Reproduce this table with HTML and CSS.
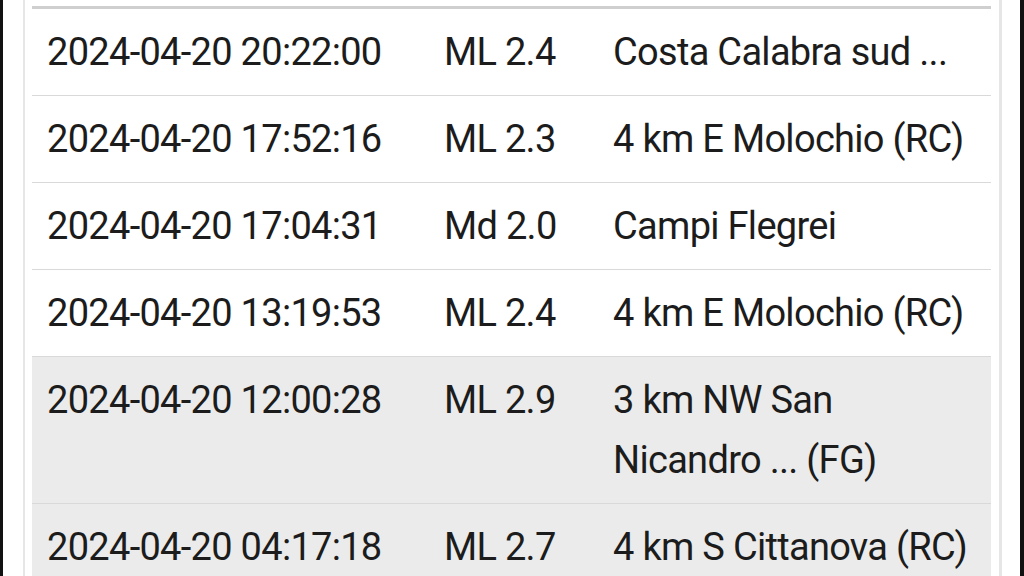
FILE: index.html
```html
<!DOCTYPE html>
<html>
<head>
<meta charset="utf-8">
<link rel="stylesheet" href="styles.css">
</head>
<body>
<div class="frame">
  <div class="panel">
    <table class="quakes">
      <colgroup>
        <col class="c-date"><col class="c-mag"><col class="c-loc">
      </colgroup>
      <tbody>
        <tr><td>2024-04-20 20:22:00</td><td>ML 2.4</td><td>Costa Calabra sud ...</td></tr>
        <tr><td>2024-04-20 17:52:16</td><td>ML 2.3</td><td>4 km E Molochio (RC)</td></tr>
        <tr><td>2024-04-20 17:04:31</td><td>Md 2.0</td><td>Campi Flegrei</td></tr>
        <tr><td>2024-04-20 13:19:53</td><td>ML 2.4</td><td>4 km E Molochio (RC)</td></tr>
        <tr class="hl"><td>2024-04-20 12:00:28</td><td>ML 2.9</td><td>3 km NW San Nicandro ... (FG)</td></tr>
        <tr class="hl"><td>2024-04-20 04:17:18</td><td>ML 2.7</td><td>4 km S Cittanova (RC)</td></tr>
      </tbody>
    </table>
  </div>
</div>
</body>
</html>
```
FILE: styles.css
```css
html, body {
  margin: 0;
  padding: 0;
  background: #fff;
  height: 100%;
  overflow: hidden;
}
.frame {
  height: 576px;
  border-left: 3px solid #111;
  border-right: 4px solid #111;
  box-sizing: border-box;
  padding: 0 18px 0 20px;
}
.panel {
  height: 100%;
  border-left: 2px solid #e6e6e6;
  border-right: 3px solid #e6e6e6;
  padding: 6px 6px 0 7px;
  box-sizing: border-box;
}
.quakes {
  width: 959px;
  border-collapse: collapse;
  table-layout: fixed;
  font-family: Roboto, "Noto Sans", sans-serif;
  font-size: 38px;
  letter-spacing: -0.7px;
  line-height: 60px;
  color: #1c1c1c;
  border-top: 3px solid #cfcfcf;
}
.c-date { width: 397px; }
.c-mag { width: 169px; }
.c-loc { width: 393px; }
.quakes td {
  padding: 13px 15px;
  vertical-align: top;
  border-bottom: 1px solid #d9d9d9;
}
.quakes tr.hl td {
  background: #ebebeb;
}
```
